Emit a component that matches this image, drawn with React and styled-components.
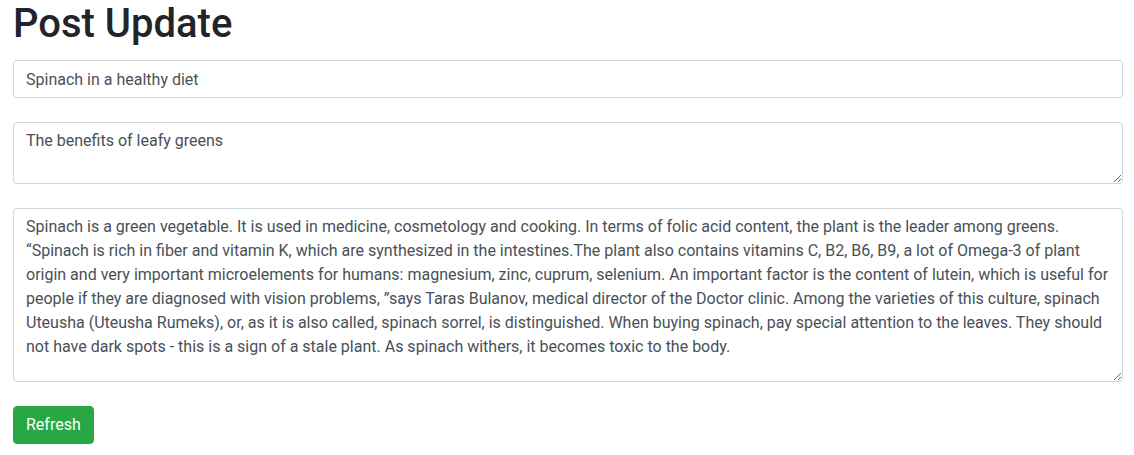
import React from 'react';
import styled, { createGlobalStyle } from 'styled-components';

const GlobalStyle = createGlobalStyle`
  * {
    box-sizing: border-box;
  }
  body {
    margin: 0;
    background: #fff;
    color: #212529;
    font-family: Roboto, "Noto Sans", "Liberation Sans", sans-serif;
    font-size: 16px;
    line-height: 1.5;
  }
`;

const Page = styled.div`
  display: flex;
  flex-direction: column;
  align-items: flex-start;
  padding: 0 11px 0 13px;
`;

const Title = styled.h1`
  margin: 0 0 12px;
  font-size: 40px;
  font-weight: 500;
  line-height: 1.2;
  color: #212529;
`;

const Form = styled.form`
  display: flex;
  flex-direction: column;
  gap: 24px;
  width: 100%;
`;

const fieldStyles = `
  display: block;
  width: 100%;
  padding: 6px 12px;
  font-family: Roboto, "Noto Sans", "Liberation Sans", sans-serif;
  font-size: 16px;
  font-weight: 400;
  line-height: 1.5;
  color: #495057;
  background: #fff;
  border: 1px solid #ced4da;
  border-radius: 4px;
  outline: none;
`;

const Input = styled.input`
  ${fieldStyles}
  height: 38px;
`;

const TextArea = styled.textarea`
  ${fieldStyles}
  height: ${(p) => p.$height}px;
  resize: vertical;
`;

const Button = styled.button`
  align-self: flex-start;
  height: 38px;
  padding: 6px 12px;
  font-family: Roboto, "Noto Sans", "Liberation Sans", sans-serif;
  font-size: 16px;
  line-height: 1.5;
  color: #fff;
  background: #28a745;
  border: 1px solid #28a745;
  border-radius: 4px;
  cursor: pointer;
`;

const body =
  'Spinach is a green vegetable. It is used in medicine, cosmetology and cooking. In terms of folic acid content, the plant is the leader among greens. \u201cSpinach is rich in fiber and vitamin K, which are synthesized in the intestines.The plant also contains vitamins C, B2, B6, B9, a lot of Omega-3 of plant origin and very important microelements for humans: magnesium, zinc, cuprum, selenium. An important factor is the content of lutein, which is useful for people if they are diagnosed with vision problems, \u201dsays Taras Bulanov, medical director of the Doctor clinic. Among the varieties of this culture, spinach Uteusha (Uteusha Rumeks), or, as it is also called, spinach sorrel, is distinguished. When buying spinach, pay special attention to the leaves. They should not have dark spots - this is a sign of a stale plant. As spinach withers, it becomes toxic to the body.';

export default function App() {
  return (
    <Page>
      <GlobalStyle />
      <Title>Post Update</Title>
      <Form onSubmit={(e) => e.preventDefault()}>
        <Input type="text" defaultValue="Spinach in a healthy diet" />
        <TextArea $height={62} defaultValue="The benefits of leafy greens" />
        <TextArea $height={174} defaultValue={body} />
        <Button type="submit">Refresh</Button>
      </Form>
    </Page>
  );
}
